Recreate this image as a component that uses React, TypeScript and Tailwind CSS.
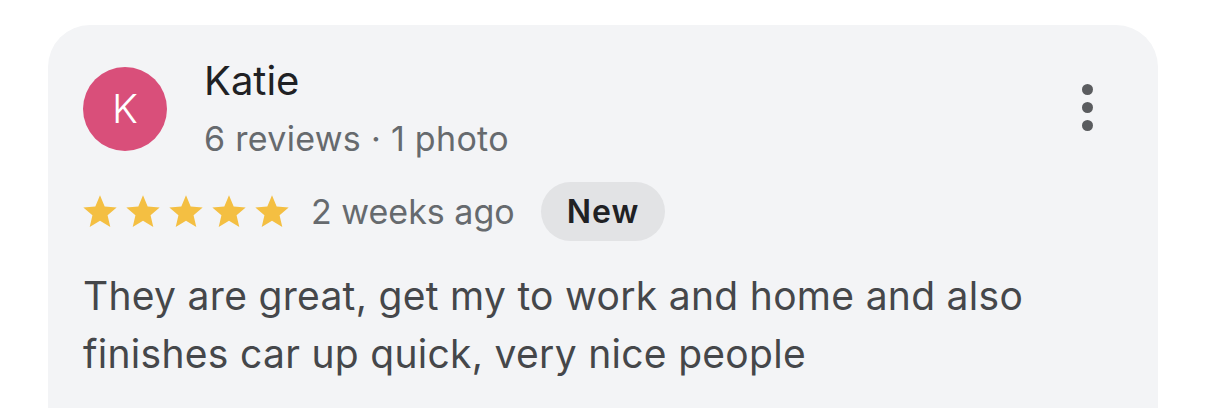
import React from 'react';

const Star = () => (
    <svg viewBox="0 0 24 24" className="w-[40px] h-[40px] fill-[#f4bf42]">
        <path d="M12 17.27L18.18 21l-1.64-7.03L22 9.24l-7.19-.61L12 2 9.19 8.63 2 9.24l5.46 4.73L5.82 21z" />
    </svg>
);

export default function App() {
    return (
        <div className="w-[1206px] h-[408px] bg-white overflow-hidden font-['Inter',sans-serif]">
            <div className="ml-[48px] mt-[25px] w-[1110px] h-[420px] rounded-t-[42px] bg-[#f3f4f6] pl-[35px] pr-[65px] pt-[42px]">
                {/* Header */}
                <div className="flex items-start">
                    <div className="w-[84px] h-[84px] rounded-full bg-[#d94f7a] flex items-center justify-center text-white text-[40px] font-light leading-none">
                        K
                    </div>
                    <div className="ml-[37px] flex-1">
                        <div className="-mt-[6px] text-[40px] leading-[40px] text-[#202124]">Katie</div>
                        <div className="mt-[18px] text-[34px] leading-[40px] tracking-[0.3px] text-[#666a6e]">6 reviews · 1 photo</div>
                    </div>
                    <div className="flex flex-col gap-[7px] mt-[17px]">
                        <span className="w-[11px] h-[11px] rounded-full bg-[#5a5c5f]" />
                        <span className="w-[11px] h-[11px] rounded-full bg-[#5a5c5f]" />
                        <span className="w-[11px] h-[11px] rounded-full bg-[#5a5c5f]" />
                    </div>
                </div>

                {/* Rating row */}
                <div className="flex items-center mt-[23px] -ml-[3px]">
                    <div className="flex gap-[3px]">
                        <Star />
                        <Star />
                        <Star />
                        <Star />
                        <Star />
                    </div>
                    <span className="ml-[19px] text-[34px] text-[#666a6e]">2 weeks ago</span>
                    <span className="ml-[26px] h-[59px] px-[26px] rounded-full bg-[#e2e3e5] flex items-center text-[32px] tracking-[1px] font-semibold text-[#202124]">
                        New
                    </span>
                </div>

                {/* Review */}
                <p className="mt-[26px] text-[39px] leading-[58px] tracking-[0.3px] text-[#45474a] max-w-[1000px]">
                    They are great, get my to work and home and also finishes car up quick, very nice people
                </p>
            </div>
        </div>
    );
}
